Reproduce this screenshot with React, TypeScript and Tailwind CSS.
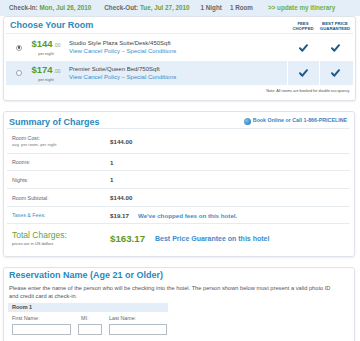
import React from "react";

function Check() {
  return (
    <svg width="9" height="8" viewBox="0 0 9 8">
      <path d="M1 4.3 L3.4 6.7 L8 1.2" fill="none" stroke="#1f5a89" strokeWidth="2" strokeLinecap="round" strokeLinejoin="round" />
    </svg>
  );
}

function Radio({ on }: { on?: boolean }) {
  return (
    <div className="w-[6px] h-[6px] rounded-full border border-[#9aa3ab] bg-white flex items-center justify-center">
      {on ? <div className="w-[2.5px] h-[2.5px] rounded-full bg-[#555]" /> : null}
    </div>
  );
}

function RoomRow({ price, desc, on, blue }: { price: string; desc: string; on?: boolean; blue?: boolean }) {
  return (
    <div className={"flex items-stretch mx-[2px] " + (blue ? "h-[24px] bg-[#e4eff9]" : "h-[27px]")}>
      <div className="flex items-center pl-[10px]">
        <Radio on={on} />
      </div>
      <div className="ml-[4px] w-[40px] flex flex-col items-center justify-center">
        <div className="flex items-baseline text-[#5a9a22] font-bold leading-[9px]">
          <span className="text-[9.5px]">{price}</span>
          <span className="text-[5px] font-normal text-[#8aa870] ml-[1px]">.00</span>
        </div>
        <div className="text-[4px] text-[#666] leading-[5px] mt-[1px]">per night</div>
      </div>
      <div className="ml-[3px] flex-1 flex flex-col justify-center">
        <div className="text-[6px] text-[#444] leading-[7px]">{desc}</div>
        <div className="text-[6px] text-[#3b8dcc] leading-[7px] mt-[1px]">View Cancel Policy &ndash; Special Conditions</div>
      </div>
      <div className={"w-[32px] flex items-center justify-center " + (blue ? "border-l border-white" : "")}>
        <Check />
      </div>
      <div className={"w-[32px] flex items-center justify-center " + (blue ? "border-l border-white" : "")}>
        <Check />
      </div>
      <div className="w-[2px]" />
    </div>
  );
}

function SumRow({ h, label, sub, value, extra, labelBlue }: { h: string; label: string; sub?: string; value: string; extra?: string; labelBlue?: boolean }) {
  return (
    <div className={"flex items-center border-b border-[#e6ecf0] " + h}>
      <div className="w-[103px] pl-[5px] flex flex-col">
        <div className={"text-[5.3px] leading-[6px] " + (labelBlue ? "text-[#3b8dcc]" : "text-[#666]")}>{label}</div>
        {sub ? <div className="text-[4.2px] leading-[5px] text-[#777] mt-[1px]">{sub}</div> : null}
      </div>
      <div className="text-[6.2px] font-bold text-[#444] leading-[7px]">{value}</div>
      {extra ? <div className="ml-[9px] text-[6.2px] font-bold text-[#3b8dcc] leading-[7px]">{extra}</div> : null}
    </div>
  );
}

export default function App() {
  return (
    <div className="w-[360px] h-[341px] overflow-hidden bg-white font-['Liberation_Sans',Arial,sans-serif]">
      <div className="h-[16px] bg-[#e4eef8] flex items-center pl-[9px] text-[6.3px] font-bold text-[#666] whitespace-nowrap">
        <span>
          Check-In: <span className="text-[#6a9f33]">Mon, Jul 26, 2010</span>
        </span>
        <span className="ml-[13px]">
          Check-Out: <span className="text-[#6a9f33]">Tue, Jul 27, 2010</span>
        </span>
        <span className="ml-[11px]">1 Night</span>
        <span className="ml-[8px]">1 Room</span>
        <span className="ml-[15px] text-[#6fae45]">&gt;&gt; update my itinerary</span>
      </div>

      <div className="ml-[3px] w-[353px] border border-[#dde3e8] rounded-[3px] shadow-[0_1px_2px_rgba(0,0,0,0.08)]">
        <div className="flex h-[17px] mx-[2px] border-b border-[#e8edf0]">
          <div className="flex-1 pl-[4px] pt-[4px] text-[9px] leading-[9px] font-bold text-[#2b88bb]">Choose Your Room</div>
          <div className="w-[32px] pt-[4px] text-center text-[4.3px] leading-[5px] font-bold text-[#1f5079]">
            FEES
            <br />
            CHOPPED
          </div>
          <div className="w-[32px] pt-[4px] text-center text-[4.3px] leading-[5px] font-bold text-[#1f5079]">
            BEST PRICE
            <br />
            GUARANTEED
          </div>
          <div className="w-[2px]" />
        </div>
        <RoomRow price="$144" desc="Studio Style Plaza Suite/Desk/450Sqft" on />
        <RoomRow price="$174" desc="Premier Suite/Queen Bed/750Sqft" blue />
        <div className="text-right text-[3.8px] leading-[5px] text-[#555] pr-[5px] mt-[4px] pb-[6px]">
          Note: All rooms are booked for double occupancy.
        </div>
      </div>

      <div className="ml-[3px] mt-[10px] w-[352px] border border-[#dde3e8] rounded-[3px] shadow-[0_1px_2px_rgba(0,0,0,0.08)] pb-[3px]">
        <div className="flex h-[17px] mx-[3px] mr-[4px] border-b border-[#e6ecf0]">
          <div className="flex-1 pl-[2px] pt-[6px] text-[9px] leading-[9px] font-bold text-[#2b88bb]">Summary of Charges</div>
          <div className="flex items-center pt-[2px] pr-[3px]">
            <div className="w-[7px] h-[7px] rounded-full bg-[radial-gradient(circle_at_35%_35%,#7ec0f0,#1f6fb5)]" />
            <span className="ml-[2px] text-[5.3px] font-bold text-[#3b7fc0]">Book Online or Call 1-866-PRICELINE</span>
          </div>
        </div>
        <div className="mx-[3px] mr-[4px]">
          <SumRow h="h-[25px]" label="Room Cost:" sub="avg. per room, per night" value="$144.00" />
          <SumRow h="h-[17px]" label="Rooms:" value="1" />
          <SumRow h="h-[18px]" label="Nights:" value="1" />
          <SumRow h="h-[18px]" label="Room Subtotal:" value="$144.00" />
          <SumRow h="h-[17px]" label="Taxes & Fees:" value="$19.17" extra="We've chopped fees on this hotel." labelBlue />
          <div className="flex items-center h-[29px]">
            <div className="w-[103px] pl-[5px] flex flex-col">
              <div className="text-[8.5px] leading-[9px] text-[#66a33a]">Total Charges:</div>
              <div className="text-[4px] leading-[5px] text-[#666] mt-[1px]">prices are in US dollars</div>
            </div>
            <div className="text-[9.7px] leading-[10px] font-bold text-[#5b9a23]">$163.17</div>
            <div className="ml-[10px] text-[7px] leading-[8px] font-bold text-[#3b8dcc]">Best Price Guarantee on this hotel</div>
          </div>
        </div>
      </div>

      <div className="ml-[3px] mt-[10px] w-[352px] h-[90px] border border-[#dde3e8] rounded-[3px] shadow-[0_1px_2px_rgba(0,0,0,0.08)]">
        <div className="pl-[5px] pt-[3px] text-[9px] leading-[9px] font-bold text-[#2b88bb]">Reservation Name (Age 21 or Older)</div>
        <div className="pl-[5px] pt-[4px] text-[5.7px] leading-[8px] text-[#555]">
          Please enter the name of the person who will be checking into the hotel. The person shown below must present a valid photo ID
          <br />
          and credit card at check-in.
        </div>
        <div className="ml-[4px] mt-[3px] w-[160px] h-[9px] bg-[#e4eef8] flex items-center pl-[4px] text-[5.5px] font-bold text-[#444]">Room 1</div>
        <div className="flex pl-[8px] mt-[3px] text-[5.3px] leading-[7px] text-[#666]">
          <div className="w-[59px] flex flex-col">
            <span>First Name:</span>
            <div className="mt-[2px] w-[59px] h-[11px] border border-[#b5bcc3] bg-white" />
          </div>
          <div className="ml-[7px] flex flex-col">
            <span className="pl-[3px]">MI:</span>
            <div className="mt-[2px] w-[24px] h-[11px] border border-[#b5bcc3] bg-white" />
          </div>
          <div className="ml-[7px] flex flex-col">
            <span>Last Name:</span>
            <div className="mt-[2px] w-[58px] h-[11px] border border-[#b5bcc3] bg-white" />
          </div>
        </div>
      </div>
    </div>
  );
}
